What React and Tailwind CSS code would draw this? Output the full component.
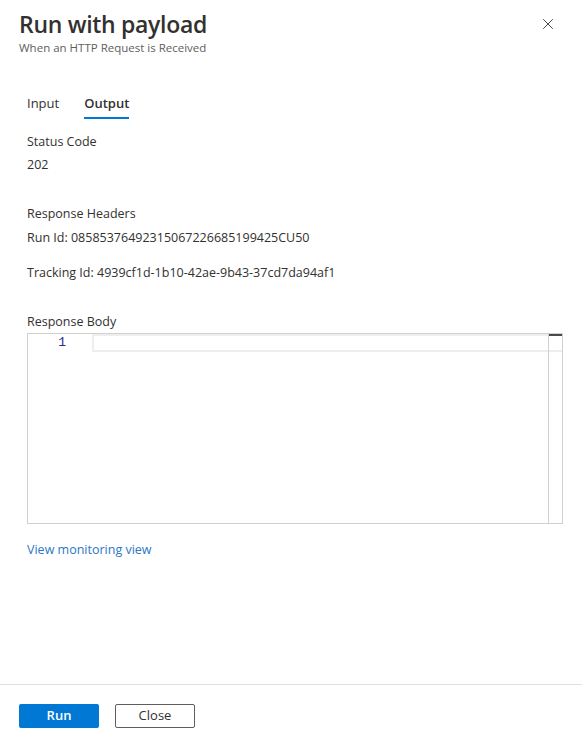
import { X } from 'lucide-react'

export default function App() {
  return (
    <div className="w-[582px] h-[749px] bg-white flex flex-col text-[#323130] font-['Open_Sans',sans-serif]">
      {/* Header */}
      <div className="flex items-start justify-between pl-[19px] pr-[25px] pt-[10px]">
        <div className="flex flex-col">
          <h1 className="text-[23px] leading-[28px] font-semibold tracking-[-0.3px]">Run with payload</h1>
          <p className="text-[11.5px] leading-[15px] text-[#605e5c] mt-[2px]">When an HTTP Request is Received</p>
        </div>
        <button className="mt-[5px] text-[#323130]">
          <X size={18} strokeWidth={1.2} />
        </button>
      </div>

      {/* Tabs */}
      <div className="flex gap-[25px] pl-[27px] mt-[39px] text-[13px]">
        <div className="pb-[3px]">Input</div>
        <div className="pb-[3px] border-b-2 border-[#0078d4] font-semibold">Output</div>
      </div>

      {/* Content */}
      <div className="flex flex-col pl-[27px] pr-[19px] text-[12.5px] leading-[18px] mt-[14px]">
        <div>Status Code</div>
        <div className="mt-[5px]">202</div>

        <div className="mt-[31px]">Response Headers</div>
        <div className="mt-[6px]">Run Id: 08585376492315067226685199425CU50</div>
        <div className="mt-[17px]">Tracking Id: 4939cf1d-1b10-42ae-9b43-37cd7da94af1</div>

        <div className="mt-[31px]">Response Body</div>
        <div className="mt-[2px] h-[191px] border border-[#d2d0ce] flex">
          <div className="w-[64px] flex justify-end pr-[26px] font-['Liberation_Mono',monospace] text-[13px] leading-[18px] text-[#2b2b8c]">1</div>
          <div className="flex-1 flex flex-col">
            <div className="h-[18px] border-2 border-[#eeeeee] border-r-0"></div>
          </div>
          <div className="w-[14px] border-l border-[#d2d0ce] flex flex-col">
            <div className="h-[18px] border-b-2 border-[#eeeeee] relative">
              <div className="absolute top-0 left-0 right-0 h-[2px] bg-[#4a4a4a]"></div>
            </div>
          </div>
        </div>

        <a className="mt-[17px] text-[#2b78c5] cursor-pointer">View monitoring view</a>
      </div>

      <div className="flex-1"></div>

      {/* Footer */}
      <div className="border-t border-[#e1dfdd] h-[65px] flex items-center gap-[16px] pl-[19px] pb-[2px]">
        <button className="w-[80px] h-[24px] bg-[#0078d4] text-white text-[13px] font-semibold rounded-[2px]">Run</button>
        <button className="w-[80px] h-[24px] border border-[#605e5c] text-[13px] rounded-[2px]">Close</button>
      </div>
    </div>
  )
}
